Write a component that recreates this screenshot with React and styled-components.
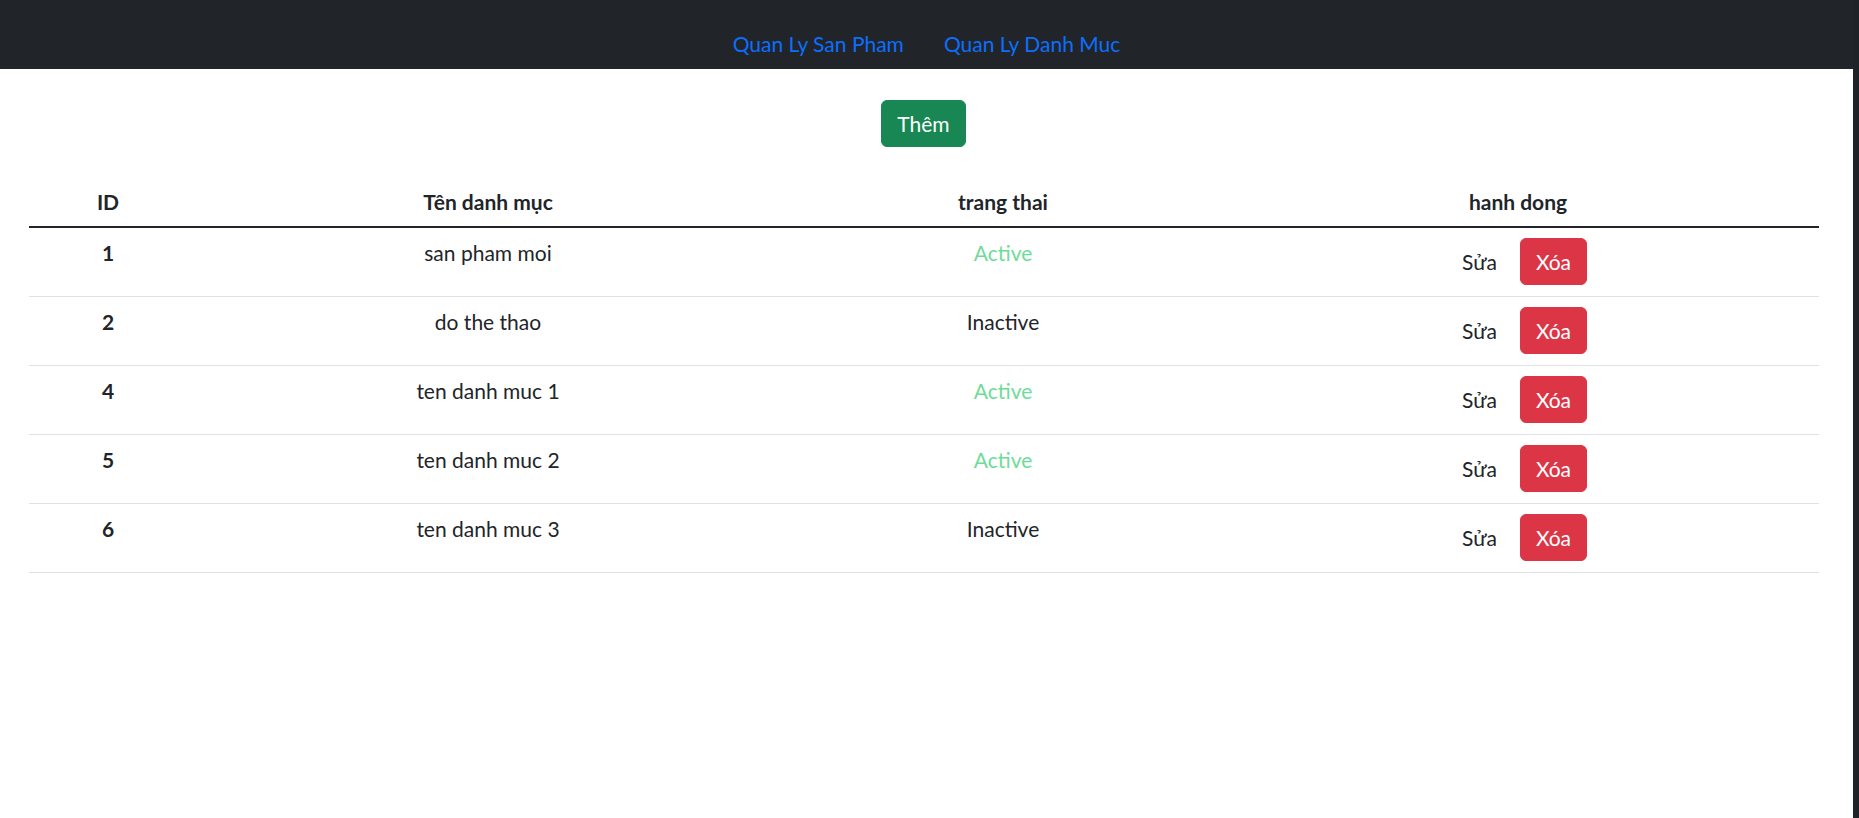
import React from 'react';
import styled, {createGlobalStyle} from 'styled-components';

const GlobalStyle = createGlobalStyle`
  html, body {
    margin: 0;
    padding: 0;
    background: #fff;
  }
  body {
    font-family: 'Lato', 'Noto Sans', sans-serif;
    font-size: 21px;
    line-height: 30px;
    color: #212529;
  }
`

const categories = [
  {id: 1, name: 'san pham moi', active: true},
  {id: 2, name: 'do the thao', active: false},
  {id: 4, name: 'ten danh muc 1', active: true},
  {id: 5, name: 'ten danh muc 2', active: true},
  {id: 6, name: 'ten danh muc 3', active: false},
];

const columns = [
  {label: 'ID', width: 158},
  {label: 'Tên danh mục', width: 602},
  {label: 'trang thai', width: 428},
  {label: 'hanh dong', width: 602},
];

function App() {
  return (
    <Page>
      <GlobalStyle />
      <Main>
        <NavBar>
          <NavLink href='#'>Quan Ly San Pham</NavLink>
          <NavLink href='#'>Quan Ly Danh Muc</NavLink>
        </NavBar>
        <Container>
          <Toolbar>
            <Button variant='success'>Thêm</Button>
          </Toolbar>
          <Table>
            <colgroup>
              {columns.map(c => <col key={c.label} style={{width: c.width}} />)}
            </colgroup>
            <thead>
              <tr>
                {columns.map(c => <Th key={c.label}>{c.label}</Th>)}
              </tr>
            </thead>
            <tbody>
              {categories.map(cat => (
                <tr key={cat.id}>
                  <IdCell>{cat.id}</IdCell>
                  <Td>{cat.name}</Td>
                  <Td><Status active={cat.active}>{cat.active ? 'Active' : 'Inactive'}</Status></Td>
                  <Td>
                    <Actions>
                      <Button variant='link'>Sửa</Button>
                      <Button variant='danger'>Xóa</Button>
                    </Actions>
                  </Td>
                </tr>
              ))}
            </tbody>
          </Table>
        </Container>
      </Main>
      <ScrollTrack />
    </Page>
  );
}

const Page = styled.div`
  display: flex;
  min-height: 100vh;
`

const Main = styled.div`
  flex: 1;
  min-width: 0;
`

const ScrollTrack = styled.div`
  width: 6px;
  flex-shrink: 0;
  background: #1f2226;
`

const NavBar = styled.nav`
  height: 69px;
  box-sizing: border-box;
  background: #212529;
  display: flex;
  justify-content: center;
  align-items: flex-end;
  padding-bottom: 10px;
`

const NavLink = styled.a`
  color: #0d6efd;
  text-decoration: none;
  line-height: 30px;
  padding: 0 20px;
`

const Container = styled.div`
  margin: 0 35px 0 29px;
`

const Toolbar = styled.div`
  display: flex;
  justify-content: center;
  padding: 31px 0 30px;
`

const variants = {
  success: {bg: '#198754', color: '#fff'},
  danger: {bg: '#dc3545', color: '#fff'},
  link: {bg: 'transparent', color: '#212529'},
};

const Button = styled.button`
  font-family: inherit;
  font-size: 21px;
  line-height: 30px;
  height: 47px;
  padding: 0 ${p => (p.variant === 'link' ? '12px' : '15px')};
  border: 1px solid ${p => variants[p.variant].bg};
  border-radius: 6px;
  background: ${p => variants[p.variant].bg};
  color: ${p => variants[p.variant].color};
  cursor: pointer;
`

const Table = styled.table`
  width: 100%;
  border-collapse: collapse;
  table-layout: fixed;
`

const Th = styled.th`
  padding: 10px 10px 9px;
  font-weight: 700;
  text-align: center;
  border-bottom: 2px solid #212529;
`

const Td = styled.td`
  padding: 10px 10px 11px;
  height: 47px;
  text-align: center;
  vertical-align: top;
  border-bottom: 1px solid #dee2e6;
`

const IdCell = styled(Td)`
  font-weight: 700;
`

const Status = styled.span`
  color: ${p => (p.active ? '#6edc98' : '#212529')};
`

const Actions = styled.div`
  display: flex;
  justify-content: center;
  align-items: center;
  gap: 10px;
`

export default App;
